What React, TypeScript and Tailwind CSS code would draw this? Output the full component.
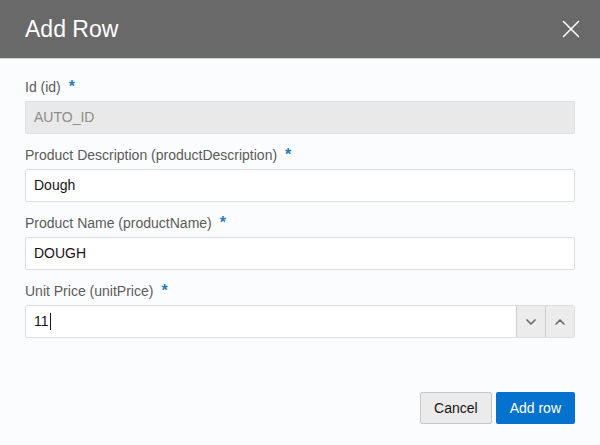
import { ChevronDown, ChevronUp, X } from "lucide-react"

const fields = [
  { label: "Id (id)", value: "AUTO_ID", disabled: true },
  { label: "Product Description (productDescription)", value: "Dough" },
  { label: "Product Name (productName)", value: "DOUGH" },
]

function Label({ text }: { text: string }) {
  return (
    <div className="h-5 mb-1 flex items-center text-[14px] text-[#5c5b59]">
      <span>{text}</span>
      <span className="ml-2 text-[#2a7ab8] text-[16px] font-bold leading-none">*</span>
    </div>
  )
}

export default function App() {
  return (
    <div className="w-[600px] h-[445px] bg-[#fbfcfd] flex flex-col font-['Liberation_Sans',Arial,sans-serif]">
      <div className="h-[59px] bg-[#696969] border-b border-[#cfcfcf] flex items-center justify-between pl-[25px] pr-[14px] shrink-0">
        <h1 className="text-white text-[23px] font-normal pt-px">Add Row</h1>
        <X className="text-white w-[30px] h-[30px]" strokeWidth={1.2} />
      </div>

      <div className="px-[25px] pt-[18px] flex flex-col gap-[11px]">
        {fields.map((f) => (
          <div key={f.label}>
            <Label text={f.label} />
            <div
              className={
                "h-[33px] border rounded-[2px] flex items-center px-[8px] text-[14px] " +
                (f.disabled
                  ? "bg-[#e9e9e9] border-[#e0e0e0] text-[#8e8d8b]"
                  : "bg-white border-[#dedede] text-[#161513]")
              }
            >
              {f.value}
            </div>
          </div>
        ))}
        <div>
          <Label text="Unit Price (unitPrice)" />
          <div className="h-[33px] border border-[#dedede] rounded-[2px] bg-white flex">
            <div className="flex-1 flex items-center px-[8px] text-[14px] text-[#161513]">
              11<span className="inline-block w-px h-[17px] bg-[#161513] ml-px" />
            </div>
            <div className="w-[29px] bg-[#ececec] border-l border-[#cdcdcd] flex items-center justify-center">
              <ChevronDown className="w-[16px] h-[16px] text-[#6a6a6a]" strokeWidth={2.5} />
            </div>
            <div className="w-[29px] bg-[#ececec] border-l border-[#cdcdcd] flex items-center justify-center">
              <ChevronUp className="w-[16px] h-[16px] text-[#6a6a6a]" strokeWidth={2.5} />
            </div>
          </div>
        </div>
      </div>

      <div className="mt-auto mb-[21px] px-[25px] flex justify-end gap-[4px]">
        <button className="h-[32px] px-[13px] bg-[#ebebeb] border border-[#c6c6c6] rounded-[2px] text-[14px] text-[#161513]">
          Cancel
        </button>
        <button className="h-[32px] px-[14px] bg-[#0572ce] rounded-[2px] text-[14px] text-white">
          Add row
        </button>
      </div>
    </div>
  )
}
